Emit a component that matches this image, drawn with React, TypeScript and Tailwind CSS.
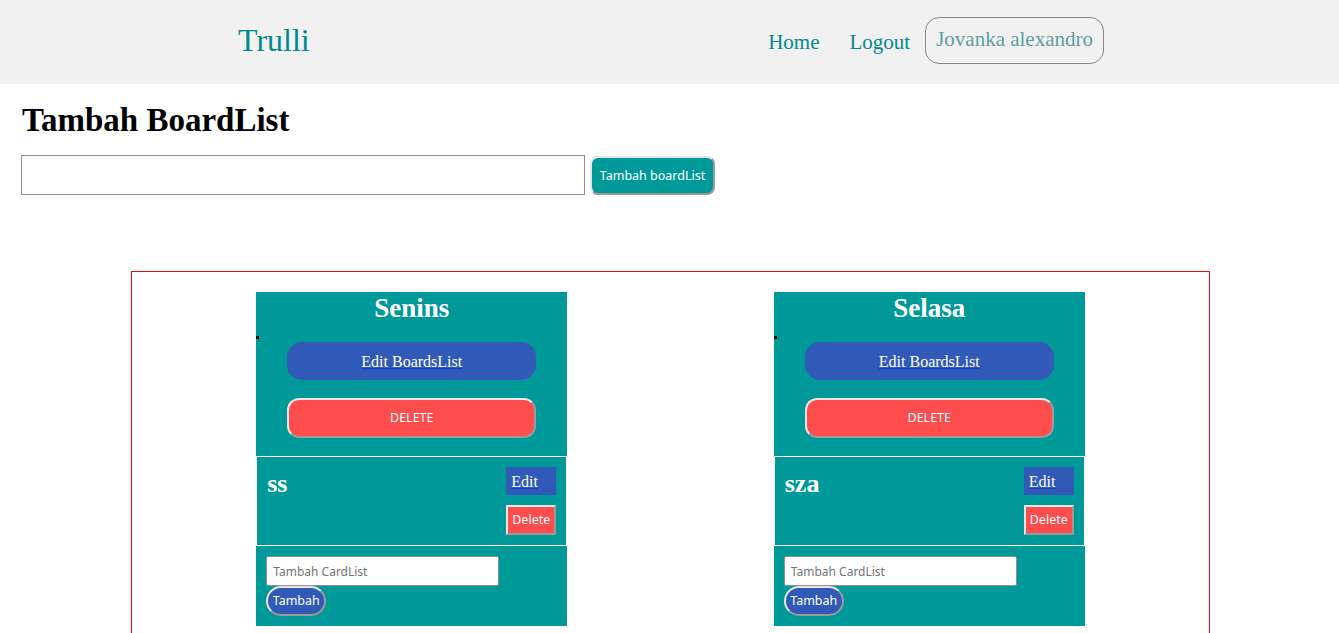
import React from 'react'

const serif = { fontFamily: '"Liberation Serif", "Times New Roman", serif' }

type Board = { title: string; card: string }

const boards: Board[] = [
    { title: 'Senins', card: 'ss' },
    { title: 'Selasa', card: 'sza' },
]

function Navbar() {
    return (
        <nav className="h-[84px] bg-[#f1f1f1] flex items-center justify-between pl-[238px] pr-[235px] font-['Liberation_Serif',serif]">
            <span className="text-[32px] text-[#008b8b] leading-none -mt-[4px]">Trulli</span>
            <div className="flex items-center">
                <a className="text-[21px] text-[#008b8b] mr-[30px] mt-[2px]">Home</a>
                <a className="text-[21px] text-[#008b8b] mr-[15px] mt-[2px]">Logout</a>
                <button className="h-[47px] px-[10px] border border-[#888] rounded-[14px] text-[21px] text-[#5f9ea0] -mt-[4px]">
                    Jovanka alexandro
                </button>
            </div>
        </nav>
    )
}

function BoardCard({ board }: { board: Board }) {
    return (
        <div className="w-[311px] flex flex-col">
            {/* Header */}
            <div className="bg-[#009999] flex flex-col items-center pb-[18px]">
                <h2 className="text-[27px] font-bold text-white leading-[30px] pt-[1px] h-[30px]" style={serif}>{board.title}</h2>
                <div className="self-stretch h-[20px] pt-[14px]">
                    <span className="block w-[3px] h-[3px] bg-black"></span>
                </div>
                <button className="w-[249px] h-[38px] pt-[2px] rounded-[15px] bg-[#3059b8] text-white text-[16px]" style={serif}>
                    <span className="underline decoration-[#0b3fd6]">Edit BoardsList</span>
                </button>
                <button className="mt-[18px] w-[249px] h-[40px] pt-[1px] rounded-[12px] bg-[#ff4d4d] text-white text-[12.5px] border-2 border-t-[#e6e6e6] border-l-[#e6e6e6] border-r-[#9a9a9a] border-b-[#9a9a9a] font-['Noto_Sans',sans-serif]">
                    DELETE
                </button>
            </div>

            {/* Card item */}
            <div className="border border-white bg-[#009999] p-[10px] flex justify-between">
                <h3 className="text-[26px] font-bold text-white leading-[30px] mt-[2px]" style={serif}>{board.card}</h3>
                <div className="flex flex-col gap-[10px]">
                    <button className="w-[50px] h-[28px] pt-[1px] bg-[#3059b8] text-white text-[16px] text-left pl-[5px]" style={serif}>
                        <span className="underline decoration-[#0b3fd6]">Edit</span>
                    </button>
                    <button className="w-[50px] h-[30px] pt-[1px] bg-[#ff4d4d] text-white text-[12.5px] border-2 border-t-[#e6e6e6] border-l-[#e6e6e6] border-r-[#9a9a9a] border-b-[#9a9a9a] font-['Noto_Sans',sans-serif]">
                        Delete
                    </button>
                </div>
            </div>

            {/* Add card form */}
            <div className="bg-[#009999] p-[10px] flex flex-col items-start font-['Noto_Sans',sans-serif]">
                <input
                    className="w-[233px] h-[30px] bg-white border border-[#8f8f9d] rounded-[2px] px-[6px] text-[12px] placeholder:text-[#757575] outline-none"
                    placeholder="Tambah CardList"
                />
                <button className="w-[60px] h-[30px] pt-[1px] rounded-full bg-[#3059b8] text-white text-[12.5px] border-2 border-t-[#e6e6e6] border-l-[#e6e6e6] border-r-[#9a9a9a] border-b-[#9a9a9a]">
                    Tambah
                </button>
            </div>
        </div>
    )
}

export default function App() {
    return (
        <div className="min-h-screen bg-white font-['Liberation_Serif',serif]">
            <Navbar />

            <section className="px-[21px]">
                <h1 className="mt-[18px] text-[33px] font-bold leading-[37px] text-black pl-px" style={serif}>Tambah BoardList</h1>
                <div className="mt-[16px] flex items-start gap-[5px]">
                    <input className="w-[564px] h-[40px] border border-[#8f8f9d] bg-white outline-none px-2" />
                    <button className="mt-px w-[125px] h-[39px] pt-[2px] rounded-[8px] bg-[#009999] text-white text-[12.5px] border-2 border-t-[#e6e6e6] border-l-[#e6e6e6] border-r-[#9a9a9a] border-b-[#9a9a9a] font-['Noto_Sans',sans-serif]">
                        Tambah boardList
                    </button>
                </div>
            </section>

            <div className="mt-[76px] ml-[131px] w-[1079px] border border-[#dd1111] px-[21px] pt-[20px] pb-[20px] grid grid-cols-2">
                {boards.map((b) => (
                    <div key={b.title} className="flex justify-center">
                        <BoardCard board={b} />
                    </div>
                ))}
            </div>
        </div>
    )
}
